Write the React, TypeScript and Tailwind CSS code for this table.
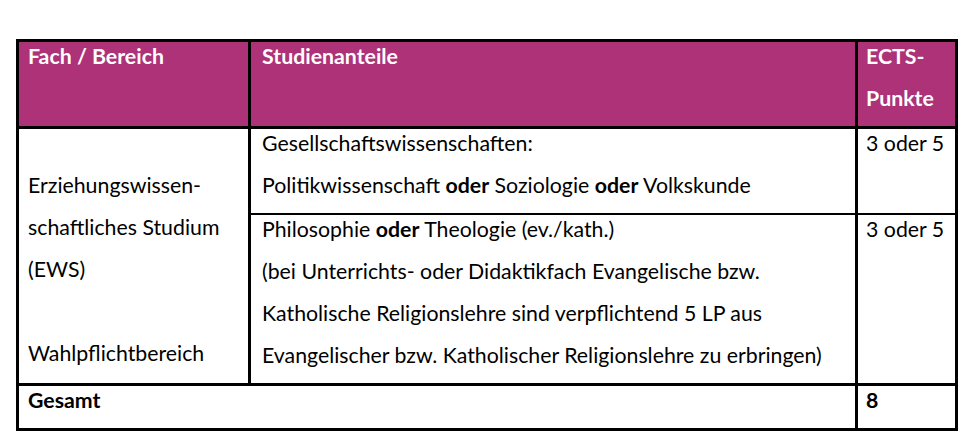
import React from "react";

const Line = ({ children }: { children?: React.ReactNode }) => (
  <div className="h-[42px] leading-[28px] whitespace-nowrap">{children}</div>
);

export default function App() {
  return (
    <div
      className="w-[974px] h-[433px] bg-white pt-[39px] pl-[16px] text-black text-[21.3px]"
      style={{ fontFamily: "Lato, 'Open Sans', sans-serif" }}
    >
      <div className="w-[942px] border-[3px] border-black">
        {/* header */}
        <div className="flex bg-[#ad3278] text-white font-bold border-b-[3px] border-black">
          <div className="w-[232px] border-r-[3px] border-black pl-[9px]">
            <Line>Fach / Bereich</Line>
            <Line />
          </div>
          <div className="w-[607px] border-r-[3px] border-black pl-[11px]">
            <Line>Studienanteile</Line>
          </div>
          <div className="flex-1 pl-[8px]">
            <Line>ECTS-</Line>
            <Line>Punkte</Line>
          </div>
        </div>
        {/* body */}
        <div className="flex">
          <div className="w-[232px] border-r-[3px] border-black pl-[9px]">
            <Line />
            <Line>Erziehungswissen-</Line>
            <Line>schaftliches Studium</Line>
            <Line>(EWS)</Line>
            <Line />
            <Line>Wahlpflichtbereich</Line>
          </div>
          <div className="flex-1 flex flex-col">
            <div className="flex border-b-[2px] border-black">
              <div className="w-[607px] border-r-[3px] border-black pl-[11px]">
                <Line>Gesellschaftswissenschaften:</Line>
                <Line>
                  Politikwissenschaft <b>oder</b> Soziologie <b>oder</b> Volkskunde
                </Line>
              </div>
              <div className="flex-1 pl-[8px]">
                <Line>3 oder 5</Line>
              </div>
            </div>
            <div className="flex">
              <div className="w-[607px] border-r-[3px] border-black pl-[11px]">
                <Line>
                  Philosophie <b>oder</b> Theologie (ev./kath.)
                </Line>
                <Line>(bei Unterrichts- oder Didaktikfach Evangelische bzw.</Line>
                <Line>Katholische Religionslehre sind verpflichtend 5 LP aus</Line>
                <Line>Evangelischer bzw. Katholischer Religionslehre zu erbringen)</Line>
              </div>
              <div className="flex-1 pl-[8px]">
                <Line>3 oder 5</Line>
              </div>
            </div>
          </div>
        </div>
        {/* total */}
        <div className="flex border-t-[3px] border-black font-bold">
          <div className="w-[839px] border-r-[3px] border-black pl-[9px]">
            <Line>Gesamt</Line>
          </div>
          <div className="flex-1 pl-[8px]">
            <Line>8</Line>
          </div>
        </div>
      </div>
    </div>
  );
}
